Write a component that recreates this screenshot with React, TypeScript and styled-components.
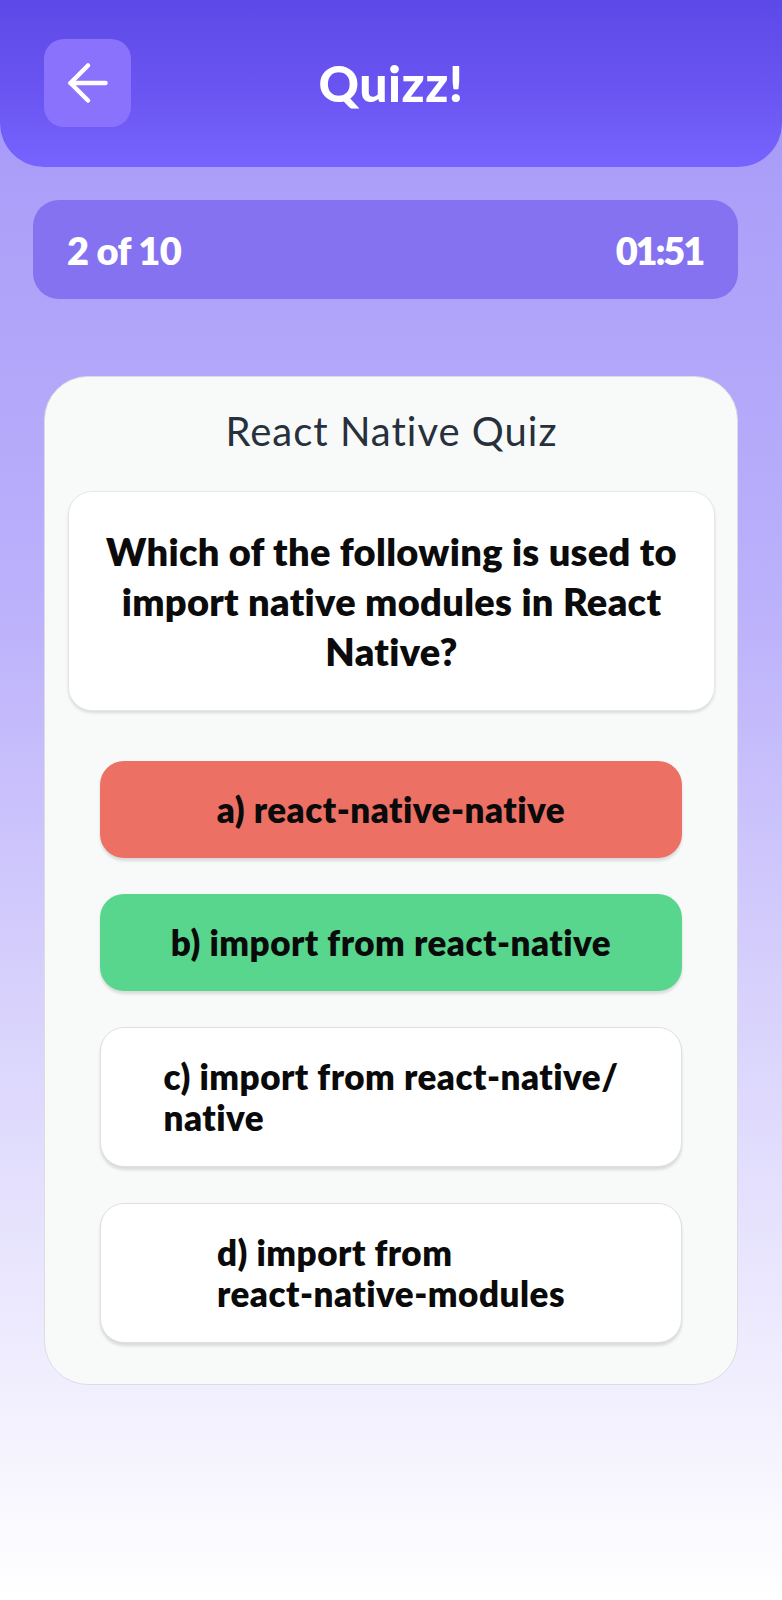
import React from "react";
import styled, { createGlobalStyle } from "styled-components";
import { ArrowLeft } from "lucide-react";

const Global = createGlobalStyle`
  html, body { margin: 0; padding: 0; }
  body { font-family: "Lato", "Noto Sans", sans-serif; }
  * { box-sizing: border-box; }
`;

const Page = styled.div`
  min-height: 1600px;
  width: 782px;
  background: linear-gradient(180deg, #a294f8 0%, #ab9ff9 12%, #bcb1fb 38%, #d7d1fc 62%, #f0eefe 86%, #ffffff 100%);
  display: flex;
  flex-direction: column;
`;

const Header = styled.header`
  height: 167px;
  border-radius: 0 0 44px 44px;
  background: linear-gradient(180deg, #5d49e7 0%, #6a55f2 55%, #7763fd 100%);
  display: grid;
  grid-template-columns: 1fr auto 1fr;
  align-items: center;
  padding: 0 44px 0 44px;
`;

const BackButton = styled.button`
  width: 87px;
  height: 88px;
  border: none;
  border-radius: 20px;
  background: #8a72fd;
  color: #fff;
  display: flex;
  align-items: center;
  justify-content: center;
  padding: 0;
  justify-self: start;
  margin-top: -1px;
`;

const Title = styled.h1`
  margin: 0;
  color: #fff;
  font-family: "Lato", sans-serif;
  font-weight: 900;
  font-size: 50px;
  letter-spacing: 0.5px;
  line-height: 1;
  margin-top: -2px;
`;

const ProgressBar = styled.div`
  margin: 33px 44px 0 33px;
  height: 99px;
  border-radius: 26px;
  background: #8572f0;
  display: flex;
  align-items: center;
  justify-content: space-between;
  padding: 0 35px 0 34px;
  color: #fff;
  font-weight: 800;
  font-size: 38px;
`;

const Counter = styled.span`
  letter-spacing: -0.6px;
`;

const Timer = styled.span`
  letter-spacing: -2.2px;
`;

const Card = styled.section`
  margin: 77px 44px 0 44px;
  background: #f8fafa;
  border: 1.5px solid #dcdde2;
  border-radius: 44px;
  padding: 24px 22px 41px 23px;
  display: flex;
  flex-direction: column;
  align-items: stretch;
`;

const QuizName = styled.h2`
  margin: 0;
  text-align: center;
  font-weight: 400;
  font-size: 40px;
  letter-spacing: 1px;
  line-height: 60px;
  color: #27303b;
`;

const QuestionBox = styled.div`
  margin-top: 30px;
  height: 220px;
  background: #ffffff;
  border: 1px solid #e6e7ea;
  border-radius: 24px;
  box-shadow: 0 2px 3px rgba(0, 0, 0, 0.12);
  display: flex;
  align-items: center;
  justify-content: center;
  padding: 0 24px;
`;

const QuestionText = styled.p`
  margin: 0;
  text-align: center;
  font-weight: 800;
  font-size: 38px;
  letter-spacing: 0.3px;
  line-height: 50px;
  color: #0b0b0b;
`;

const Options = styled.div`
  margin-top: 50px;
  padding: 0 33px 0 32px;
  display: flex;
  flex-direction: column;
  gap: 36px;
`;

type Tone = "wrong" | "right" | "plain";

const toneBg: Record<Tone, string> = {
  wrong: "#ec7063",
  right: "#58d68d",
  plain: "#ffffff",
};

const OptionButton = styled.button<{ $tone: Tone }>`
  width: 100%;
  border: ${(p) => (p.$tone === "plain" ? "1.5px solid #dedfe3" : "none")};
  border-radius: 24px;
  background: ${(p) => toneBg[p.$tone]};
  box-shadow: 0 3px 3px rgba(0, 0, 0, 0.12);
  padding: 28px 16px;
  display: flex;
  justify-content: center;
  font-family: "Lato", sans-serif;
  cursor: pointer;
`;

const OptionText = styled.span`
  display: inline-block;
  text-align: left;
  font-weight: 800;
  font-size: 35px;
  letter-spacing: 0.5px;
  line-height: 41px;
  color: #0a0a0a;
`;

const options: { tone: Tone; lines: string[] }[] = [
  { tone: "wrong", lines: ["a) react-native-native"] },
  { tone: "right", lines: ["b) import from react-native"] },
  { tone: "plain", lines: ["c) import from react-native/", "native"] },
  { tone: "plain", lines: ["d) import from", "react-native-modules"] },
];

export default function App() {
  return (
    <>
      <Global />
      <Page>
        <Header>
          <BackButton aria-label="Back">
            <ArrowLeft size={60} strokeWidth={1.8} />
          </BackButton>
          <Title>Quizz!</Title>
          <span />
        </Header>
        <ProgressBar>
          <Counter>2 of 10</Counter>
          <Timer>01:51</Timer>
        </ProgressBar>
        <Card>
          <QuizName>React Native Quiz</QuizName>
          <QuestionBox>
            <QuestionText>
              Which of the following is used to import native modules in React Native?
            </QuestionText>
          </QuestionBox>
          <Options>
            {options.map((o, i) => (
              <OptionButton key={i} $tone={o.tone}>
                <OptionText>
                  {o.lines.map((l, j) => (
                    <React.Fragment key={j}>
                      {j > 0 && <br />}
                      {l}
                    </React.Fragment>
                  ))}
                </OptionText>
              </OptionButton>
            ))}
          </Options>
        </Card>
      </Page>
    </>
  );
}
